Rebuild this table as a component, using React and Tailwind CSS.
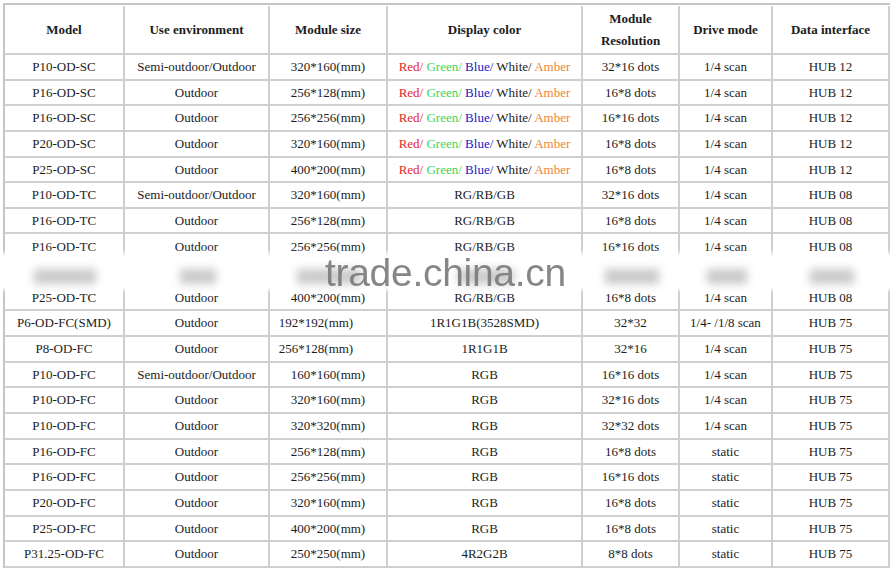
import React from "react";

const widths = ["w-[120px]", "w-[145px]", "w-[118px]", "w-[195px]", "w-[97px]", "w-[93px]", "w-[117px]"];

const COLORS = "colors";

const rows = [
  ["P10-OD-SC", "Semi-outdoor/Outdoor", "320*160(mm)", COLORS, "32*16 dots", "1/4 scan", "HUB 12"],
  ["P16-OD-SC", "Outdoor", "256*128(mm)", COLORS, "16*8 dots", "1/4 scan", "HUB 12"],
  ["P16-OD-SC", "Outdoor", "256*256(mm)", COLORS, "16*16 dots", "1/4 scan", "HUB 12"],
  ["P20-OD-SC", "Outdoor", "320*160(mm)", COLORS, "16*8 dots", "1/4 scan", "HUB 12"],
  ["P25-OD-SC", "Outdoor", "400*200(mm)", COLORS, "16*8 dots", "1/4 scan", "HUB 12"],
  ["P10-OD-TC", "Semi-outdoor/Outdoor", "320*160(mm)", "RG/RB/GB", "32*16 dots", "1/4 scan", "HUB 08"],
  ["P16-OD-TC", "Outdoor", "256*128(mm)", "RG/RB/GB", "16*8 dots", "1/4 scan", "HUB 08"],
  ["P16-OD-TC", "Outdoor", "256*256(mm)", "RG/RB/GB", "16*16 dots", "1/4 scan", "HUB 08"],
  // row hidden under the watermark
  ["", "", "", "", "", "", ""],
  ["P25-OD-TC", "Outdoor", "400*200(mm)", "RG/RB/GB", "16*8 dots", "1/4 scan", "HUB 08"],
  ["P6-OD-FC(SMD)", "Outdoor", "192*192(mm)", "1R1G1B(3528SMD)", "32*32", "1/4- /1/8 scan", "HUB 75"],
  ["P8-OD-FC", "Outdoor", "256*128(mm)", "1R1G1B", "32*16", "1/4 scan", "HUB 75"],
  ["P10-OD-FC", "Semi-outdoor/Outdoor", "160*160(mm)", "RGB", "16*16 dots", "1/4 scan", "HUB 75"],
  ["P10-OD-FC", "Outdoor", "320*160(mm)", "RGB", "32*16 dots", "1/4 scan", "HUB 75"],
  ["P10-OD-FC", "Outdoor", "320*320(mm)", "RGB", "32*32 dots", "1/4 scan", "HUB 75"],
  ["P16-OD-FC", "Outdoor", "256*128(mm)", "RGB", "16*8 dots", "static", "HUB 75"],
  ["P16-OD-FC", "Outdoor", "256*256(mm)", "RGB", "16*16 dots", "static", "HUB 75"],
  ["P20-OD-FC", "Outdoor", "320*160(mm)", "RGB", "16*8 dots", "static", "HUB 75"],
  ["P25-OD-FC", "Outdoor", "400*200(mm)", "RGB", "16*8 dots", "static", "HUB 75"],
  ["P31.25-OD-FC", "Outdoor", "250*250(mm)", "4R2G2B", "8*8 dots", "static", "HUB 75"],
];

// widths of the smeared blobs in the watermark band, per column
const blobs = ["w-[62px]", "w-[36px]", "w-[64px]", "w-[56px]", "w-[54px]", "w-[40px]", "w-[44px]"];

function ColorList() {
  return (
    <span>
      <span className="text-[#e3262b]">Red/ </span>
      <span className="text-[#3cd65a]">Green/ </span>
      <span className="text-[#2020c4]">Blue/ </span>
      <span>White/ </span>
      <span className="text-[#ef8434]">Amber</span>
    </span>
  );
}

function Cell({ i, children, className = "" }) {
  return (
    <div className={`${widths[i]} shrink-0 h-full flex items-center justify-center border-r-2 border-[#cfcfcf] whitespace-nowrap ${className}`}>
      {children}
    </div>
  );
}

export default function App() {
  return (
    <div className="relative w-[896px] h-[569px] bg-white overflow-hidden text-[13px] text-[#1c1c1c] [font-family:'Liberation_Serif','Times_New_Roman',serif]">
      <div className="ml-[3px] mt-[3px] w-[887px] border-l-2 border-t-2 border-[#c6c6c6]">
        {/* HEADER */}
        <div className="flex h-[50px] border-b-2 border-[#cfcfcf] font-bold pt-[1px]">
          <Cell i={0}>Model</Cell>
          <Cell i={1}>Use environment</Cell>
          <Cell i={2}>Module size</Cell>
          <Cell i={3}>Display color</Cell>
          <Cell i={4}>
            <div className="text-center leading-[22px]">
              Module
              <br />
              Resolution
            </div>
          </Cell>
          <Cell i={5}>Drive mode</Cell>
          <Cell i={6}>Data interface</Cell>
        </div>

        {/* ROWS */}
        {rows.map((r, idx) => (
          <div key={idx} className="flex h-[25.65px] border-b-2 border-[#cfcfcf]">
            {r.map((v, i) => (
              <Cell
                key={i}
                i={i}
                className={i === 2 && (idx === 10 || idx === 11) ? "pr-[24px]" : ""}
              >
                {v === COLORS ? <ColorList /> : v}
              </Cell>
            ))}
          </div>
        ))}
      </div>

      {/* WATERMARK BAND */}
      <div className="absolute left-0 top-[257px] w-[896px] h-[29px] bg-white shadow-[0_0_4px_4px_white]">
        <div className="ml-[5px] flex h-full items-end pb-[2px]">
          {blobs.map((b, i) => (
            <div key={i} className={`${widths[i]} shrink-0 flex justify-center`}>
              <div className={`${b} h-[15px] bg-[#8a8a8a] opacity-45 blur-[4px]`} />
            </div>
          ))}
        </div>
      </div>
      <div className="absolute left-[325px] top-[260px] text-[39px] leading-[26px] text-[#7a7a7a] opacity-90 [font-family:'Liberation_Sans',Arial,sans-serif] tracking-[-0.3px]">
        trade.china.cn
      </div>
    </div>
  );
}
